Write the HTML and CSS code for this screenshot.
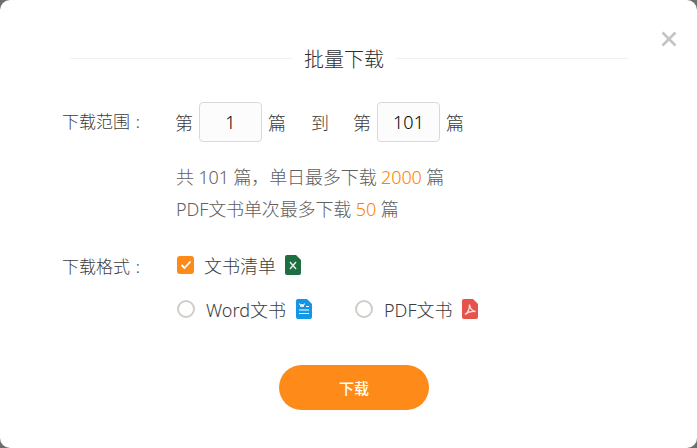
FILE: index.html
```html
<!DOCTYPE html>
<html lang="zh-CN">
<head>
    <meta charset="UTF-8">
    <title>批量下载</title>
    <link rel="stylesheet" href="styles.css">
</head>
<body>

<div class="modal">
    <span class="modal-close">
        <svg width="18" height="18" viewBox="0 0 18 18"><path d="M2.5 2.5L15.5 15.5M15.5 2.5L2.5 15.5" stroke="#c4c4c4" stroke-width="2.6" fill="none"/></svg>
    </span>

    <!-- Title -->
    <div class="modal-title">
        <span class="title-line title-line-left"></span>
        <h2>批量下载</h2>
        <span class="title-line"></span>
    </div>

    <!-- Range -->
    <div class="form-row range-row">
        <div class="form-label">下载范围&#8196;:</div>
        <div class="form-body">
            <div class="range-inputs">
                <span>第</span>
                <div class="num-input">1</div>
                <span>篇</span>
                <span class="range-to">到</span>
                <span>第</span>
                <div class="num-input">101</div>
                <span>篇</span>
            </div>
            <p class="tip tip-first">共 101 篇，单日最多下载 <em>2000</em> 篇</p>
            <p class="tip">PDF文书单次最多下载 <em>50</em> 篇</p>
        </div>
    </div>

    <!-- Format -->
    <div class="form-row format-row">
        <div class="form-label">下载格式&#8196;:</div>
        <div class="form-body">
            <div class="option">
                <span class="checkbox">
                    <svg width="12" height="10" viewBox="0 0 12 10"><path d="M1.5 5L4.5 8L10.5 1.5" stroke="#fff" stroke-width="1.8" fill="none"/></svg>
                </span>
                <span class="option-text check-text">文书清单</span>
                <svg class="file-icon" width="16" height="20" viewBox="0 0 16 20">
                    <path d="M2 0H11L16 5V18a2 2 0 0 1-2 2H2a2 2 0 0 1-2-2V2a2 2 0 0 1 2-2Z" fill="#1d6f42"/>
                    <path d="M5 7L11 14M11 7L5 14" stroke="#dfeee6" stroke-width="1.5" fill="none"/>
                </svg>
            </div>
            <div class="option-line">
                <div class="option">
                    <span class="radio"></span>
                    <span class="option-text">Word文书</span>
                    <svg class="file-icon word-icon" width="16" height="20" viewBox="0 0 16 20">
                        <path d="M2 0H11L16 5V18a2 2 0 0 1-2 2H2a2 2 0 0 1-2-2V2a2 2 0 0 1 2-2Z" fill="#1296e8"/>
                        <path d="M3 5H4L5 8L6 5L7 8L8 5H9" stroke="#fff" stroke-width="1" fill="none"/>
                        <path d="M10 7.5H13M3 11H13M3 14.5H13" stroke="#fff" stroke-width="1.2" fill="none"/>
                    </svg>
                </div>
                <div class="option">
                    <span class="radio"></span>
                    <span class="option-text">PDF文书</span>
                    <svg class="file-icon" width="16" height="20" viewBox="0 0 16 20">
                        <path d="M2 0H11L16 5V18a2 2 0 0 1-2 2H2a2 2 0 0 1-2-2V2a2 2 0 0 1 2-2Z" fill="#e5534b"/>
                        <path d="M3 15.5C5.5 14 7.5 10 7.5 5.5C8 9 10 12 13.5 12.5C10 12 6 13 3 15.5Z" stroke="#fbdedc" stroke-width="1.3" fill="none"/>
                    </svg>
                </div>
            </div>
        </div>
    </div>

    <div class="modal-footer">
        <button class="download-btn">下载</button>
    </div>
</div>

</body>
</html>
```

FILE: styles.css
```css
/* Basic Reset */
* {
    margin: 0;
    padding: 0;
    box-sizing: border-box;
}

html, body {
    height: 100%;
    overflow: hidden;
}

body {
    font-family: "Noto Sans", "Noto Sans CJK SC", sans-serif;
    font-weight: 300;
    background-color: #6e6e6e;
    color: #3c3c3c;
}

/* Modal */
.modal {
    position: relative;
    height: 448px;
    background-color: #fff;
    border-radius: 10px;
    padding: 46px 69px 0 62px;
}

.modal-close {
    position: absolute;
    top: 30px;
    right: 19px;
    width: 18px;
    height: 18px;
}

.modal-close svg {
    display: block;
}

/* Title */
.modal-title {
    display: flex;
    align-items: center;
    margin-left: 8px;
    height: 28px;
}

.modal-title h2 {
    font-size: 20px;
    font-weight: 300;
    color: #2e2e2e;
    line-height: 28px;
    padding: 0 12px;
}

.title-line {
    flex: 1;
    height: 1px;
    background-color: #f0f0f0;
    margin-top: -4px;
}

.title-line-left {
    flex: none;
    width: 222px;
}

/* Form */
.form-row {
    display: flex;
    font-size: 17px;
}

.range-row {
    margin-top: 28px;
}

.format-row {
    margin-top: 25px;
}

.form-label {
    width: 113px;
    line-height: 40px;
    flex-shrink: 0;
}

.format-row .form-label {
    line-height: 34px;
}

.range-inputs {
    display: flex;
    align-items: center;
    height: 40px;
    font-size: 18px;
}

.num-input {
    width: 63px;
    height: 40px;
    margin: 0 6px;
    background-color: #fcfcfc;
    border: 1px solid #d9d9d9;
    border-radius: 4px;
    text-align: center;
    line-height: 38px;
    font-size: 18px;
    color: #000;
}

.range-to {
    margin: 0 24px 0 25px;
}

.tip {
    font-size: 18px;
    line-height: 32px;
    color: #606060;
    margin-left: 1px;
    letter-spacing: -0.12px;
}

.tip-first {
    margin-top: 19px;
}

.tip em {
    font-style: normal;
    color: #ff8000;
}

/* Options */
.option-line {
    display: flex;
    gap: 43px;
    margin-top: 14px;
}

.option {
    display: flex;
    align-items: center;
    height: 30px;
    padding-left: 2px;
}

.option-line .option + .option {
    padding-left: 0;
}

.option-text {
    font-size: 18px;
    color: #3c3c3c;
    margin-left: 11px;
}

.check-text {
    margin-left: 10px;
}

.file-icon {
    margin-left: 9px;
}

.word-icon {
    margin-left: 10px;
}

.checkbox {
    display: flex;
    align-items: center;
    justify-content: center;
    width: 17px;
    height: 18px;
    border-radius: 3px;
    background-color: #fd8a19;
}

.radio {
    width: 18px;
    height: 18px;
    border: 2px solid #d0cdc9;
    border-radius: 50%;
}

/* Footer */
.modal-footer {
    margin: 41px 0 0 217px;
}

.download-btn {
    width: 150px;
    height: 45px;
    border: none;
    border-radius: 23px;
    background-color: #fd8a19;
    color: #fff;
    font-family: inherit;
    font-size: 15px;
    font-weight: 500;
}
```
